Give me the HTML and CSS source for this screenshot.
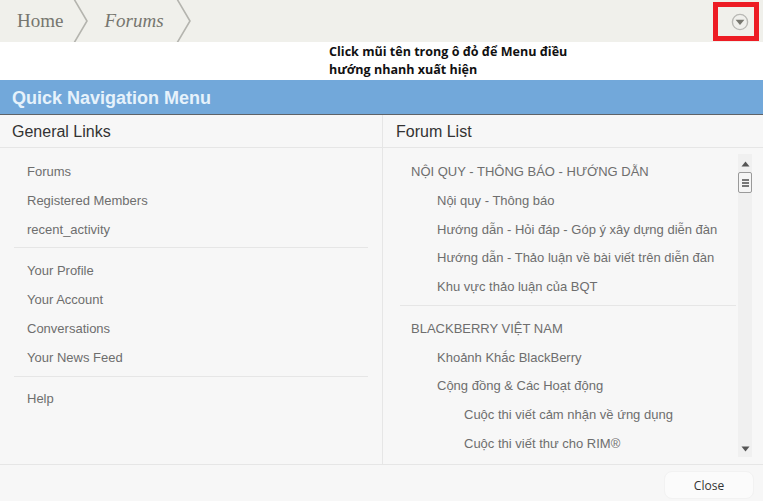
FILE: index.html
```html
<!DOCTYPE html>
<html lang="en">
<head>
    <meta charset="UTF-8">
    <meta name="viewport" content="width=device-width, initial-scale=1.0">
    <title>Quick Navigation Menu</title>
    <link rel="stylesheet" href="styles.css">
</head>
<body>

    <!-- Breadcrumb bar -->
    <div class="crumbs">
        <a class="crumb">Home</a>
        <svg class="chevron" width="16" height="42" viewBox="0 0 16 42"><path d="M1 -1 L14 21 L1 43" fill="none" stroke="#b4b4ae" stroke-width="1.6"/></svg>
        <a class="crumb crumb-current">Forums</a>
        <svg class="chevron" width="16" height="42" viewBox="0 0 16 42"><path d="M1 -1 L14 21 L1 43" fill="none" stroke="#b4b4ae" stroke-width="1.6"/></svg>
        <div class="nav-toggle">
            <svg width="18" height="18" viewBox="0 0 18 18"><circle cx="9" cy="9" r="7.6" fill="#f0f0ec" stroke="#b9b9b5" stroke-width="1.4"/><path d="M4.6 6.8 H13.4 L9 12 Z" fill="#77776f"/></svg>
        </div>
    </div>

    <!-- Caption -->
    <div class="caption">Click mũi tên trong ô đỏ để Menu điều<br>hướng nhanh xuất hiện</div>

    <h1 class="menu-title">Quick Navigation Menu</h1>

    <div class="columns">
        <div class="col col-left">
            <h2 class="col-head">General Links</h2>
            <ul class="links">
                <li>Forums</li>
                <li>Registered Members</li>
                <li>recent_activity</li>
            </ul>
            <ul class="links">
                <li>Your Profile</li>
                <li>Your Account</li>
                <li>Conversations</li>
                <li>Your News Feed</li>
            </ul>
            <ul class="links">
                <li>Help</li>
            </ul>
        </div>
        <div class="col col-right">
            <h2 class="col-head">Forum List</h2>
            <div class="forum-wrap">
                <div class="forums">
                    <ul class="links">
                        <li class="lvl-0">NỘI QUY - THÔNG BÁO - HƯỚNG DẪN</li>
                        <li class="lvl-1">Nội quy - Thông báo</li>
                        <li class="lvl-1">Hướng dẫn - Hỏi đáp - Góp ý xây dựng diễn đàn</li>
                        <li class="lvl-1">Hướng dẫn - Thảo luận về bài viết trên diễn đàn</li>
                        <li class="lvl-1">Khu vực thảo luận của BQT</li>
                    </ul>
                    <ul class="links">
                        <li class="lvl-0">BLACKBERRY VIỆT NAM</li>
                        <li class="lvl-1">Khoảnh Khắc BlackBerry</li>
                        <li class="lvl-1">Cộng đồng &amp; Các Hoạt động</li>
                        <li class="lvl-2">Cuộc thi viết cảm nhận về ứng dụng</li>
                        <li class="lvl-2">Cuộc thi viết thư cho RIM®</li>
                    </ul>
                </div>
                <div class="scrollbar">
                    <svg class="arrow" width="9" height="6" viewBox="0 0 9 6"><path d="M4.5 0.5 L8.5 5.5 H0.5 Z" fill="#555"/></svg>
                    <div class="thumb"><span></span><span></span><span></span></div>
                    <svg class="arrow arrow-down" width="9" height="6" viewBox="0 0 9 6"><path d="M0.5 0.5 H8.5 L4.5 5.5 Z" fill="#555"/></svg>
                </div>
            </div>
        </div>
    </div>

    <div class="footer">
        <button class="close-btn">Close</button>
    </div>

</body>
</html>
```

FILE: styles.css
```css
html, body {
    height: 100%;
}

body {
    margin: 0;
    width: 763px;
    height: 501px;
    overflow: hidden;
    display: flex;
    flex-direction: column;
    background-color: #f7f7f7;
    font-family: "Liberation Sans", Arial, sans-serif;
    color: #6e6e6e;
}

.crumbs {
    display: flex;
    align-items: center;
    height: 42px;
    background-color: #f0f0eb;
    font-family: "Liberation Serif", serif;
    font-size: 19px;
    overflow: hidden;
}

.crumb {
    color: #76766f;
    padding: 0 10px 0 17px;
}

.crumb-current {
    font-style: italic;
    padding: 0 12px 0 15px;
}

.chevron {
    flex: none;
}

.nav-toggle {
    margin-left: auto;
    margin-right: 4px;
    margin-top: 1px;
    width: 46px;
    height: 39px;
    box-sizing: border-box;
    border: 5px solid #ed1c24;
    padding-left: 8px;
    display: flex;
    align-items: center;
    justify-content: center;
}

.caption {
    height: 38px;
    box-sizing: border-box;
    padding: 1px 0 0 329px;
    background-color: #fff;
    color: #111;
    font-family: "Open Sans", sans-serif;
    font-size: 12.55px;
    font-weight: 700;
    line-height: 18px;
}

.menu-title {
    margin: 0;
    height: 34px;
    padding-left: 12px;
    background-color: #72a8da;
    border-bottom: 1px solid #5f6368;
    color: #e6f2fb;
    font-size: 18px;
    line-height: 36px;
    font-weight: 700;
}

.columns {
    display: flex;
    height: 349px;
}

.col-left {
    width: 382px;
    border-right: 1px solid #e6e6e6;
}

.col-right {
    flex: 1;
}

.col-head {
    margin: 0;
    height: 32px;
    border-bottom: 1px solid #e6e6e6;
    color: #333;
    font-size: 16px;
    font-weight: 400;
    line-height: 33px;
    padding-left: 12px;
}

.col-right .col-head {
    padding-left: 13px;
}

.links {
    list-style: none;
    margin: 0 14px;
    padding: 9px 0 4px;
    border-bottom: 1px solid #e6e6e6;
    font-size: 13px;
}

.links:first-of-type {
    padding: 10px 0 3px;
}

.links:last-child {
    border-bottom: none;
}

.col-left .links:last-child {
    padding-top: 8px;
}

.links li {
    height: 28.75px;
    line-height: 28.75px;
    padding-left: 13px;
    white-space: nowrap;
}

.forum-wrap {
    display: flex;
    height: 316px;
}

.forums {
    flex: 1;
    min-width: 0;
    overflow: hidden;
}

.forums .links {
    margin: 0 2px 0 17px;
}

.links .lvl-0 {
    padding-left: 11px;
}

.links .lvl-1 {
    padding-left: 37px;
}

.links .lvl-2 {
    padding-left: 64px;
}

.scrollbar {
    flex: none;
    width: 14px;
    height: 303px;
    margin: 6px 11px 0 0;
    background-color: #f0f0f0;
    display: flex;
    flex-direction: column;
    align-items: center;
}

.arrow {
    margin-top: 7px;
}

.arrow-down {
    margin-top: auto;
    margin-bottom: 5px;
}

.thumb {
    width: 14px;
    height: 21px;
    margin-top: 5px;
    box-sizing: border-box;
    border: 1px solid #9a9a9a;
    border-radius: 2px;
    background-color: #f5f5f5;
    display: flex;
    flex-direction: column;
    align-items: center;
    justify-content: center;
    gap: 1px;
}

.thumb span {
    width: 7px;
    height: 2px;
    background-color: #777;
}

.footer {
    flex: 1;
    display: flex;
    justify-content: flex-end;
    border-top: 1px solid #e6e6e6;
    padding: 6px 9px 0 0;
    background-color: #f7f7f7;
}

.close-btn {
    width: 90px;
    height: 28px;
    border: 1px solid #f2f2f2;
    border-radius: 8px;
    background-color: #fbfbfb;
    color: #333;
    font-family: "Open Sans", sans-serif;
    font-size: 12px;
}
```
